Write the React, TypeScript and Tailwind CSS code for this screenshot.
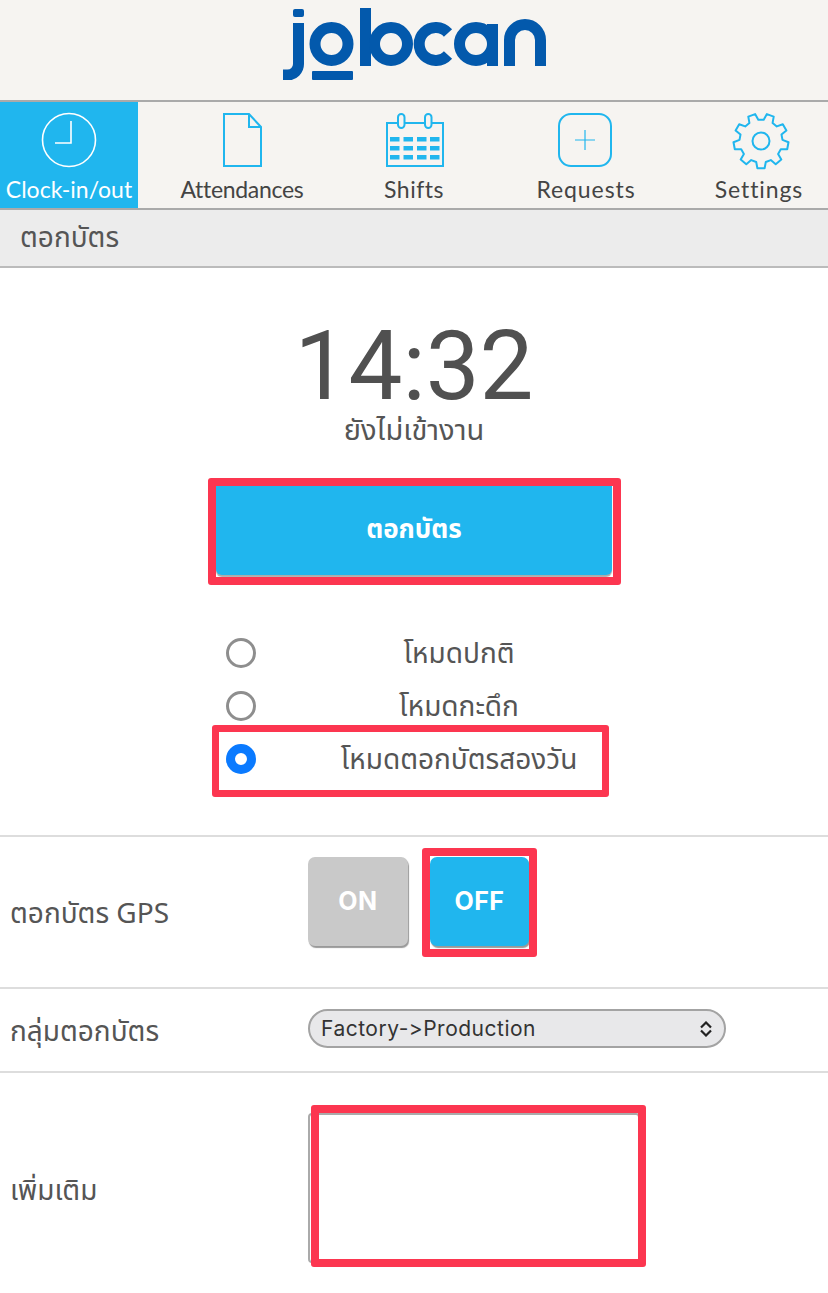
import React from "react";

const NAV_LABEL = "font-['Lato',sans-serif] text-[23px] leading-none";
const THAI = "font-['Noto_Sans','Noto_Sans_Thai','DejaVu_Sans',sans-serif]";

const Logo = () => (
  <svg width="264" height="72" viewBox="283 8 264 72" fill="none" stroke="#0359ac" strokeWidth="11">
    <rect x="293" y="9" width="11" height="8" rx="2" fill="#0359ac" stroke="none" />
    <path d="M298.5 23V64a11 11 0 0 1-11 11H283" />
    <circle cx="331.5" cy="44" r="16.5" />
    <rect x="312" y="71" width="41" height="9" rx="1" fill="#0359ac" stroke="none" />
    <path d="M365.5 8V66" />
    <circle cx="391" cy="44" r="16.5" />
    <path d="M448 33a16.5 16.5 0 1 0 0 22" />
    <circle cx="476" cy="44" r="16.5" />
    <path d="M492.5 24V66" />
    <path d="M509.5 66V40a15.5 15.5 0 0 1 31 0V66" />
  </svg>
);

const ClockIcon = () => (
  <svg width="56" height="56" viewBox="0 0 56 56" fill="none" stroke="#fff" strokeWidth="1.6">
    <circle cx="28" cy="28" r="26.5" />
    <path d="M30 9V31H14" />
  </svg>
);

const DocIcon = () => (
  <svg width="40" height="56" viewBox="0 0 40 56" fill="none" stroke="#20b6ee" strokeWidth="2">
    <path d="M2 2H27L39 15V54H2Z" />
    <path d="M27 2V15H39" />
  </svg>
);

const CalendarIcon = () => (
  <svg width="60" height="56" viewBox="384 112 60 56" fill="none" stroke="#20b6ee" strokeWidth="2">
    <path d="M387 123H443V166H387Z" />
    <rect x="398" y="114" width="6.5" height="14" rx="3.2" fill="#f6f4f1" />
    <rect x="425" y="114" width="6.5" height="14" rx="3.2" fill="#f6f4f1" />
    <g stroke="none" fill="#20b6ee">
      {[137, 146, 155].map((y) =>
        [390, 403.5, 417, 430].map((x) => <rect key={`${x}-${y}`} x={x} y={y} width="9.5" height="4.5" />)
      )}
    </g>
  </svg>
);

const PlusIcon = () => (
  <svg width="54" height="54" viewBox="0 0 54 54" fill="none" stroke="#20b6ee" className="mt-[1px] mr-[2px]">
    <rect x="1" y="1" width="52" height="52" rx="12" strokeWidth="2" />
    <path d="M27 17V37M17 27H37" strokeWidth="1.2" />
  </svg>
);

const gearPath = () => {
  const teeth = 9;
  const step = (Math.PI * 2) / teeth;
  const pts: string[] = [];
  for (let i = 0; i < teeth; i++) {
    const a = Math.PI / 2 + i * step;
    const list: [number, number][] = [
      [21.5, a - step * 0.32],
      [27.5, a - step * 0.19],
      [27.5, a + step * 0.19],
      [21.5, a + step * 0.32],
    ];
    list.forEach(([r, t]) => {
      pts.push(`${(29 + r * Math.cos(t)).toFixed(1)} ${(29 + r * Math.sin(t)).toFixed(1)}`);
    });
  }
  return `M${pts.join("L")}Z`;
};

const GearIcon = () => (
  <svg width="58" height="58" viewBox="0 0 58 58" fill="none" stroke="#20b6ee" strokeWidth="2" strokeLinejoin="round" className="ml-[3px]">
    <path d={gearPath()} />
    <circle cx="29" cy="29" r="8.5" />
  </svg>
);

const tabs = [
  { label: "Attendances", icon: <DocIcon />, tracking: "tracking-[-0.3px]" },
  { label: "Shifts", icon: <CalendarIcon />, tracking: "tracking-[0.5px]" },
  { label: "Requests", icon: <PlusIcon />, tracking: "tracking-[0.9px]" },
  { label: "Settings", icon: <GearIcon />, tracking: "tracking-[0.9px]" },
];

const RedBox = ({ className }: { className: string }) => (
  <div className={`absolute border-[#fc3650] rounded-[3px] pointer-events-none ${className}`} />
);

const modes = [
  { label: "โหมดปกติ", checked: false },
  { label: "โหมดกะดึก", checked: false },
  { label: "โหมดตอกบัตรสองวัน", checked: true },
];

export default function App() {
  return (
    <div className={`w-[828px] h-[1293px] bg-white overflow-hidden text-[#555] ${THAI}`}>
      <header className="h-[100px] bg-[#f6f4f1] flex justify-center pt-[8px] pl-[1px]">
        <Logo />
      </header>

      <nav className="h-[110px] bg-[#f6f4f1] border-y-2 border-[#aaa] grid grid-cols-[138px_208px_136px_208px_138px]">
        <div className="bg-[#20b6ee] flex flex-col items-center pt-[10px] text-white">
          <ClockIcon />
          <span className={`${NAV_LABEL} mt-[10px]`}>Clock-in/out</span>
        </div>
        {tabs.map((t) => (
          <div key={t.label} className="flex flex-col items-center text-[#444]">
            <div className="h-[66px] pt-[10px] flex items-start justify-center">{t.icon}</div>
            <span className={`${NAV_LABEL} ${t.tracking} mt-[10px]`}>{t.label}</span>
          </div>
        ))}
      </nav>

      <div className="h-[58px] bg-[#ececec] border-b-2 border-[#bbb] pl-[20px] pb-[5px] flex items-center text-[28px] leading-none">
        ตอกบัตร
      </div>

      <main>
        <section className="flex flex-col items-center pt-[50px]">
          <div className="font-['Roboto',sans-serif] font-normal text-[96px] leading-[96px] text-[#505050]">14:32</div>
          <div className="text-[29px] leading-[30px]">ยังไม่เข้างาน</div>
          <div className="relative mt-[42px]">
            <button className="block w-[396px] h-[89px] pb-[4px] bg-[#20b6ee] rounded-b-[6px] shadow-[0_2px_1px_#aaa] text-white font-bold text-[26px]">
              ตอกบัตร
            </button>
            <RedBox className="border-[8px] -left-[8px] -right-[9px] -top-[8px] -bottom-[10px]" />
          </div>
        </section>

        <section className="relative ml-[226px] w-[384px] mt-[51px] flex flex-col">
          {modes.map((m) => (
            <div key={m.label} className="h-[53px] flex items-center">
              {m.checked ? (
                <span className="w-[30px] h-[30px] rounded-full border-[9px] border-[#0a7aff] bg-white" />
              ) : (
                <span className="w-[30px] h-[30px] rounded-full border-[3px] border-[#8e8e8e] bg-white" />
              )}
              <span className="flex-1 text-center text-[28px] pl-[52px] pb-[2px]">{m.label}</span>
            </div>
          ))}
          <RedBox className="border-[7px] left-[-14px] top-[99px] w-[397px] h-[72px]" />
        </section>

        <section className="mt-[50px] border-t-2 border-[#ddd] h-[152px] flex items-center pl-[10px]">
          <div className="w-[298px] text-[28px] leading-none">ตอกบัตร GPS</div>
          <div className="flex gap-[22px] -mt-[21px] font-['Inter',sans-serif] font-bold text-[25px] tracking-[0.5px] text-white">
            <div className="w-[100px] h-[89px] rounded-[7px] bg-[#c9c9c9] shadow-[1px_2px_1px_#999] flex items-center justify-center">ON</div>
            <div className="relative w-[99px] h-[89px] rounded-[7px] bg-[#20b6ee] shadow-[1px_2px_1px_#999] flex items-center justify-center">
              OFF
              <RedBox className="border-[8px] -left-[8px] -right-[8px] -top-[9px] -bottom-[11px]" />
            </div>
          </div>
        </section>

        <section className="border-t-2 border-[#ddd] h-[84px] flex items-center pl-[10px]">
          <div className="w-[298px] text-[28px] leading-none">กลุ่มตอกบัตร</div>
          <div className="w-[418px] h-[39px] -mt-[3px] rounded-full border-2 border-[#a3a3a3] bg-[#e8e8ea] flex items-center justify-between pl-[11px] pr-[11px] font-['Inter',sans-serif] [font-variant-ligatures:none] [font-feature-settings:'calt'_0] text-[21px] tracking-[0.5px] text-[#333]">
            Factory-&gt;Production
            <svg width="14" height="16" viewBox="0 0 14 16" fill="none" stroke="#222" strokeWidth="2.2">
              <path d="M2 6.5 7 1.5 12 6.5M2 9.5 7 14.5 12 9.5" />
            </svg>
          </div>
        </section>

        <section className="border-t-2 border-[#ddd] flex items-center pl-[10px] pt-[40px]">
          <div className="w-[298px] text-[28px] leading-none mt-[2px]">เพิ่มเติม</div>
          <div className="relative w-[332px] h-[150px] rounded-[4px] border-2 border-[#aaa] bg-white">
            <RedBox className="border-[8px] left-[1px] -top-[10px] w-[335px] h-[162px]" />
          </div>
        </section>
      </main>
    </div>
  );
}
